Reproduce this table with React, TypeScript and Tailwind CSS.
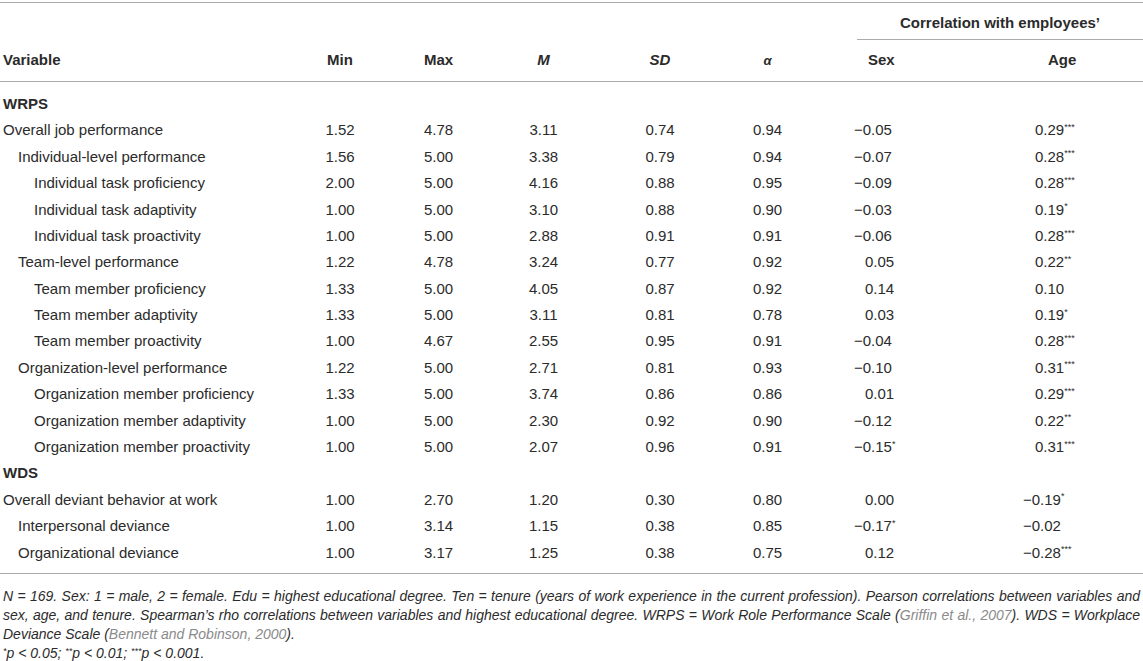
import React from 'react';

type Row = {
  label: string;
  level?: number;
  section?: boolean;
  values?: string[];
};

const rows: Row[] = [
  { label: 'WRPS', section: true },
  { label: 'Overall job performance', level: 0, values: ['1.52', '4.78', '3.11', '0.74', '0.94', '−0.05', '0.29***'] },
  { label: 'Individual-level performance', level: 1, values: ['1.56', '5.00', '3.38', '0.79', '0.94', '−0.07', '0.28***'] },
  { label: 'Individual task proficiency', level: 2, values: ['2.00', '5.00', '4.16', '0.88', '0.95', '−0.09', '0.28***'] },
  { label: 'Individual task adaptivity', level: 2, values: ['1.00', '5.00', '3.10', '0.88', '0.90', '−0.03', '0.19*'] },
  { label: 'Individual task proactivity', level: 2, values: ['1.00', '5.00', '2.88', '0.91', '0.91', '−0.06', '0.28***'] },
  { label: 'Team-level performance', level: 1, values: ['1.22', '4.78', '3.24', '0.77', '0.92', '0.05', '0.22**'] },
  { label: 'Team member proficiency', level: 2, values: ['1.33', '5.00', '4.05', '0.87', '0.92', '0.14', '0.10'] },
  { label: 'Team member adaptivity', level: 2, values: ['1.33', '5.00', '3.11', '0.81', '0.78', '0.03', '0.19*'] },
  { label: 'Team member proactivity', level: 2, values: ['1.00', '4.67', '2.55', '0.95', '0.91', '−0.04', '0.28***'] },
  { label: 'Organization-level performance', level: 1, values: ['1.22', '5.00', '2.71', '0.81', '0.93', '−0.10', '0.31***'] },
  { label: 'Organization member proficiency', level: 2, values: ['1.33', '5.00', '3.74', '0.86', '0.86', '0.01', '0.29***'] },
  { label: 'Organization member adaptivity', level: 2, values: ['1.00', '5.00', '2.30', '0.92', '0.90', '−0.12', '0.22**'] },
  { label: 'Organization member proactivity', level: 2, values: ['1.00', '5.00', '2.07', '0.96', '0.91', '−0.15*', '0.31***'] },
  { label: 'WDS', section: true },
  { label: 'Overall deviant behavior at work', level: 0, values: ['1.00', '2.70', '1.20', '0.30', '0.80', '0.00', '−0.19*'] },
  { label: 'Interpersonal deviance', level: 1, values: ['1.00', '3.14', '1.15', '0.38', '0.85', '−0.17*', '−0.02'] },
  { label: 'Organizational deviance', level: 1, values: ['1.00', '3.17', '1.25', '0.38', '0.75', '0.12', '−0.28***'] },
];

const grid = 'grid grid-cols-[290px_100px_97px_113px_120px_95px_145px_183px]';
const indent = ['pl-[3px]', 'pl-[18px]', 'pl-[34px]'];

// value with trailing significance stars rendered as superscript
const Num = ({ v }: { v: string }) => {
  const m = v.match(/^([^*]+)(\**)$/);
  const num = m ? m[1] : v;
  const stars = m ? m[2] : '';
  return (
    <span>
      {num}
      {stars && <sup className="text-[9px] top-[-0.6em]">{stars}</sup>}
    </span>
  );
};

const App = () => {
  return (
    <div
      className="w-[1143px] h-[661px] bg-white text-[#2b2b2b] pt-[2px]"
      style={{ fontFamily: '"Liberation Sans", Arial, sans-serif' }}
    >
      <div className="border-t border-[#ababab]">
        {/* header row 1 */}
        <div className="flex h-[37px]">
          <div className="flex-1" />
          <div className="w-[286px] border-b border-[#ababab] flex items-center justify-center text-[15px] font-bold pt-[4px]">
            Correlation with employees’
          </div>
        </div>
        {/* header row 2 */}
        <div className={`${grid} h-[42px] items-center border-b border-[#ababab] text-[15px] font-bold`}>
          <div className="pl-[3px]">Variable</div>
          <div className="text-center">Min</div>
          <div className="text-center">Max</div>
          <div className="text-center italic">M</div>
          <div className="text-center italic">SD</div>
          <div className="text-center italic text-[13px]">α</div>
          <div className="pl-[53px]">Sex</div>
          <div className="pl-[88px]">Age</div>
        </div>
      </div>

      <div className="pt-[9px] pb-[7px] border-b border-[#ababab] text-[15px]">
        {rows.map(row =>
          row.section ? (
            <div key={row.label} className="h-[26.4px] flex items-center pl-[3px] font-bold">
              {row.label}
            </div>
          ) : (
            <div key={row.label} className={`${grid} h-[26.4px] items-center`}>
              <div className={indent[row.level ?? 0]}>{row.label}</div>
              {row.values!.slice(0, 5).map((v, i) => (
                <div key={i} className="text-center">{v}</div>
              ))}
              <div className={row.values![5].startsWith('−') ? 'pl-[39px]' : 'pl-[50px]'}>
                <Num v={row.values![5]} />
              </div>
              <div className={row.values![6].startsWith('−') ? 'pl-[63px]' : 'pl-[75px]'}>
                <Num v={row.values![6]} />
              </div>
            </div>
          )
        )}
      </div>

      <div className="pt-[13px] px-[3px] text-[14px] italic leading-[19px]">
        <div className="whitespace-nowrap text-justify [text-align-last:justify]">
          N = 169. Sex: 1 = male, 2 = female. Edu = highest educational degree. Ten = tenure (years of work experience in the current profession). Pearson correlations between variables and
        </div>
        <div className="whitespace-nowrap text-justify [text-align-last:justify]">
          sex, age, and tenure. Spearman’s rho correlations between variables and highest educational degree. WRPS = Work Role Performance Scale (<span className="text-[#8a8a8a]">Griffin et al., 2007</span>). WDS = Workplace
        </div>
        <div className="whitespace-nowrap">
          Deviance Scale (<span className="text-[#8a8a8a]">Bennett and Robinson, 2000</span>).
        </div>
        <div className="whitespace-nowrap">
          <sup className="text-[9px]">*</sup>p &lt; 0.05; <sup className="text-[9px]">**</sup>p &lt; 0.01; <sup className="text-[9px]">***</sup>p &lt; 0.001.
        </div>
      </div>
    </div>
  );
};

export default App;
